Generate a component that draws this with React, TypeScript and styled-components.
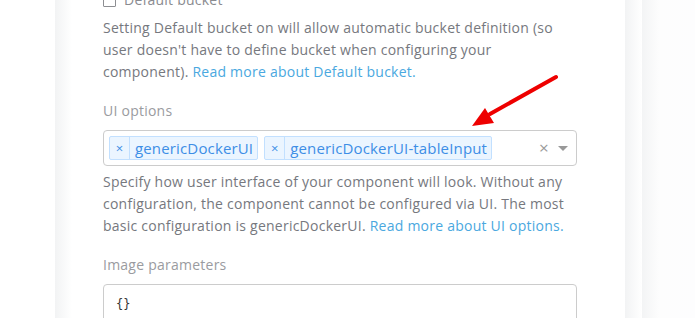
import React from "react";
import styled, { createGlobalStyle } from "styled-components";

const Global = createGlobalStyle`
  html, body { margin: 0; padding: 0; background: #ffffff; overflow: hidden; }
  body { font-family: "Open Sans", "Liberation Sans", sans-serif; }
`;

const Page = styled.div`
  position: relative;
  display: flex;
  align-items: flex-start;
  width: 695px;
  height: 318px;
  overflow: hidden;
  background: #ffffff;
`;

const Gutter = styled.div`
  width: 55px;
  flex: none;
`;

const Edge = styled.div`
  width: 17px;
  height: 318px;
  flex: none;
  background: linear-gradient(to right, #f2f3f4, #ffffff);
`;

const RightFill = styled.div`
  flex: 1;
  height: 318px;
  background: linear-gradient(to right, #f3f4f5 0px, #fdfdfd 17px, #fdfdfe 100%);
`;

const Panel = styled.div`
  width: 553px;
  flex: none;
  padding: 0 48px 0 31px;
  box-sizing: border-box;
  display: flex;
  flex-direction: column;
  color: #76787e;
  font-size: 14px;
  line-height: 22px;
  letter-spacing: 0.24px;
  & > * { flex: none; }
`;

const CheckRow = styled.label`
  display: flex;
  align-items: center;
  gap: 8px;
  margin-top: -11px;
  height: 22px;
  color: #8a8b90;
`;

const Box = styled.span`
  width: 11px;
  height: 11px;
  border: 1px solid #8d8e92;
  border-radius: 1px;
  background: #fff;
`;

const Help = styled.p<{ $top?: number }>`
  margin: ${(p) => p.$top ?? 6}px 0 0;
  white-space: nowrap;
`;

const Link = styled.a`
  color: #4aa8e0;
  text-decoration: none;
`;

const Label = styled.div<{ $top: number }>`
  margin-top: ${(p) => p.$top}px;
  color: #9a9ba0;
  height: 22px;
`;

const Select = styled.div`
  margin-top: 8px;
  height: 36px;
  box-sizing: border-box;
  border: 1px solid #cccccc;
  border-radius: 4px;
  display: flex;
  align-items: center;
  padding: 0 8px 0 5px;
  gap: 6px;
`;

const Tag = styled.div`
  display: flex;
  height: 24px;
  box-sizing: border-box;
  border: 1px solid #c2e0ff;
  border-radius: 2px;
  background: #ebf5ff;
  color: #3d8ee6;
  font-size: 15px;
  line-height: 22px;
  letter-spacing: 0.15px;
`;

const TagX = styled.span`
  width: 19px;
  text-align: center;
  border-right: 1px solid #c2e0ff;
  font-size: 13px;
  letter-spacing: 0;
`;

const TagText = styled.span`
  padding: 0 4px 0 5px;
`;

const Controls = styled.div`
  margin-left: auto;
  display: flex;
  align-items: center;
  gap: 9px;
  color: #9a9a9a;
  font-size: 17px;
`;

const Caret = styled.span`
  width: 0;
  height: 0;
  border-left: 5px solid transparent;
  border-right: 5px solid transparent;
  border-top: 5px solid #999;
`;

const Code = styled.div`
  margin-top: 8px;
  height: 60px;
  box-sizing: border-box;
  border: 1px solid #cccccc;
  border-radius: 4px;
  padding: 8px 12px;
  font-family: "DejaVu Sans Mono", monospace;
  font-size: 12px;
  letter-spacing: 0;
  color: #333;
`;

const ArrowSvg = styled.svg`
  position: absolute;
  left: 0;
  top: 0;
  pointer-events: none;
`;

export default function App() {
  return (
    <>
      <Global />
      <Page>
        <Gutter />
        <Edge />
        <Panel>
          <CheckRow>
            <Box />
            Default bucket
          </CheckRow>
          <Help $top={6}>
            Setting Default bucket on will allow automatic bucket definition (so
            <br />
            user doesn't have to define bucket when configuring your
            <br />
            component). <Link>Read more about Default bucket.</Link>
          </Help>
          <Label $top={17}>UI options</Label>
          <Select>
            <Tag>
              <TagX>×</TagX>
              <TagText>genericDockerUI</TagText>
            </Tag>
            <Tag>
              <TagX>×</TagX>
              <TagText>genericDockerUI-tableInput</TagText>
            </Tag>
            <Controls>
              <span>×</span>
              <Caret />
            </Controls>
          </Select>
          <Help $top={5}>
            Specify how user interface of your component will look. Without any
            <br />
            configuration, the component cannot be configured via UI. The most
            <br />
            basic configuration is genericDockerUI.{" "}
            <Link>Read more about UI options.</Link>
          </Help>
          <Label $top={17}>Image parameters</Label>
          <Code>{"{}"}</Code>
        </Panel>
        <Edge />
        <RightFill />
        <ArrowSvg width="695" height="318">
          <line x1="556" y1="77" x2="490" y2="114" stroke="#ee0000" strokeWidth="4" strokeLinecap="round" />
          <polygon points="472,126 485,108 494,123" fill="#ee0000" />
        </ArrowSvg>
      </Page>
    </>
  );
}
